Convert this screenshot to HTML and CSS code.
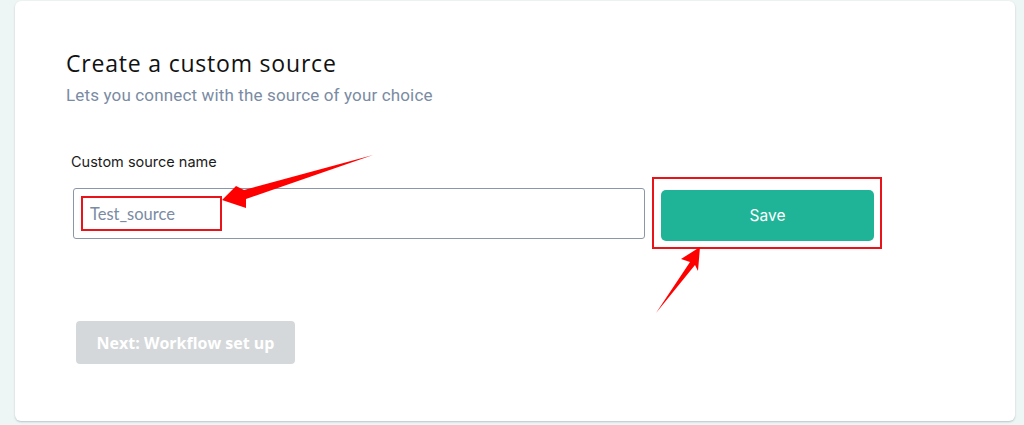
FILE: index.html
```html
<!DOCTYPE html>
<html>
<head>
<meta charset="utf-8">
<link rel="stylesheet" href="styles.css">
</head>
<body>
<div class="card">
  <h1 class="title">Create a custom source</h1>
  <p class="subtitle">Lets you connect with the source of your choice</p>
  <div class="form">
    <label class="label">Custom source name</label>
    <div class="row">
      <div class="input">
        <span class="mark-text">Test_source</span>
      </div>
      <div class="mark-btn">
        <button class="save">Save</button>
      </div>
    </div>
    <button class="next">Next: Workflow set up</button>
  </div>
</div>
<svg class="arrows" width="1024" height="425" viewBox="0 0 1024 425">
  <polygon fill="#ff0000" points="222,200 236,186 244,190 373,155 246,199 246,208"/>
  <polygon fill="#ff0000" points="700,247 681,259 690,262 656,313 695,265 698,271"/>
</svg>
</body>
</html>
```
FILE: styles.css
```css
html, body {
  margin: 0;
  padding: 0;
}
body {
  width: 1024px;
  height: 425px;
  background: #eef6f5;
  position: relative;
  overflow: hidden;
  font-family: "Roboto", "Liberation Sans", sans-serif;
}
.card {
  box-sizing: border-box;
  margin: 1px 0 0 15px;
  width: 1000px;
  height: 420px;
  background: #ffffff;
  border-radius: 6px;
  box-shadow: 0 1px 2px rgba(120, 135, 150, 0.45);
  padding: 46px 0 0 51px;
}
.title {
  margin: 0;
  font-family: "Open Sans", sans-serif;
  font-weight: 400;
  font-size: 23px;
  line-height: 32px;
  color: #111111;
  letter-spacing: 0.8px;
}
.subtitle {
  margin: 5px 0 0 0;
  font-size: 17px;
  line-height: 22px;
  color: #7a8ba3;
  letter-spacing: 0.15px;
}
.form {
  margin: 47px 0 0 5px;
  display: flex;
  flex-direction: column;
  align-items: flex-start;
}
.label {
  font-family: "Inter", sans-serif;
  font-size: 14.5px;
  line-height: 18px;
  color: #1b1b1b;
}
.row {
  display: flex;
  align-items: flex-start;
  margin-top: 6px;
  margin-left: 2px;
}
.input {
  box-sizing: border-box;
  width: 572px;
  height: 51px;
  border: 1px solid #8b96a8;
  border-radius: 3px;
  display: flex;
  align-items: center;
  padding-left: 7px;
  margin-top: 11px;
}
.mark-text {
  box-sizing: border-box;
  width: 141px;
  height: 35px;
  border: 2px solid #e8141a;
  display: flex;
  align-items: center;
  padding-left: 7px;
  font-family: "Lato", sans-serif;
  font-size: 16.5px;
  color: #7a8ba3;
}
.mark-btn {
  box-sizing: border-box;
  margin-left: 7px;
  width: 230px;
  height: 72px;
  border: 2px solid #e8141a;
  padding: 11px 6px 0 7px;
}
.save {
  display: block;
  width: 213px;
  height: 51px;
  border: none;
  border-radius: 5px;
  background: #1fb497;
  color: #ffffff;
  font-family: "Inter", sans-serif;
  font-size: 15.5px;
  cursor: pointer;
}
.next {
  margin-top: 72px;
  margin-left: 5px;
  width: 219px;
  height: 43px;
  border: none;
  border-radius: 4px;
  background: #d5d8da;
  color: #ffffff;
  font-family: "Open Sans", sans-serif;
  font-weight: 700;
  font-size: 16px;
  padding: 0;
}
.arrows {
  position: absolute;
  left: 0;
  top: 0;
  pointer-events: none;
}
```
